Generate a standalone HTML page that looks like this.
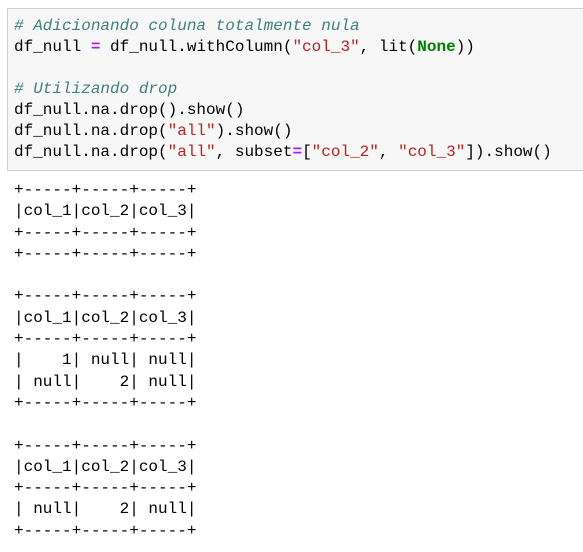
<!DOCTYPE html>
<html><head><meta charset="utf-8"><style>
body{margin:0;background:#fff;width:583px;height:552px;overflow:hidden;font-family:"Liberation Mono",monospace;font-size:16px;color:#000}
.cell{position:absolute;left:7px;top:8px;width:590px;height:163px;background:#f7f7f7;border:1px solid #cfcfcf;box-sizing:border-box}
pre{margin:0;font-family:inherit;font-size:16px;line-height:21px;white-space:pre}
.code{position:absolute;left:14px;top:16px}
.out{position:absolute;left:14px;top:180px;line-height:21.3px}
.c{color:#408080;font-style:italic}
.o{color:#aa22ff;font-weight:bold}
.s{color:#ba2121}
.k{color:#008000;font-weight:bold}
</style></head><body>
<div class="cell"></div>
<pre class="code"><span class="c"># Adicionando coluna totalmente nula</span>
df_null <span class="o">=</span> df_null.withColumn(<span class="s">"col_3"</span>, lit(<span class="k">None</span>))

<span class="c"># Utilizando drop</span>
df_null.na.drop().show()
df_null.na.drop(<span class="s">"all"</span>).show()
df_null.na.drop(<span class="s">"all"</span>, subset<span class="o">=</span>[<span class="s">"col_2"</span>, <span class="s">"col_3"</span>]).show()</pre>
<pre class="out">+-----+-----+-----+
|col_1|col_2|col_3|
+-----+-----+-----+
+-----+-----+-----+

+-----+-----+-----+
|col_1|col_2|col_3|
+-----+-----+-----+
|    1| null| null|
| null|    2| null|
+-----+-----+-----+

+-----+-----+-----+
|col_1|col_2|col_3|
+-----+-----+-----+
| null|    2| null|
+-----+-----+-----+</pre>
</body></html>
